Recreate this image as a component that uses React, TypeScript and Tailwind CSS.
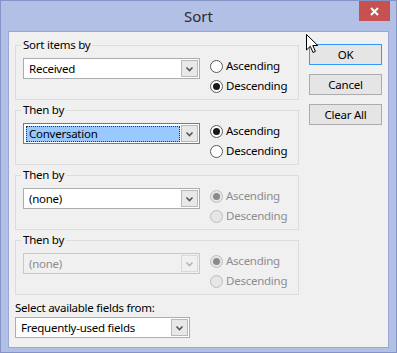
import React from "react";

type SortGroup = {
  label: string;
  value: string;
  asc: boolean;
  highlight?: boolean;
  comboDisabled?: boolean;
  radiosDisabled?: boolean;
};

const groups: SortGroup[] = [
  { label: "Sort items by", value: "Received", asc: false },
  { label: "Then by", value: "Conversation", asc: true, highlight: true },
  { label: "Then by", value: "(none)", asc: true, radiosDisabled: true },
  { label: "Then by", value: "(none)", asc: true, comboDisabled: true, radiosDisabled: true },
];

function Chevron({ disabled }: { disabled?: boolean }) {
  return (
    <svg width="9" height="6" viewBox="0 0 9 6">
      <path
        d="M1.5 1.5 L4.5 4.5 L7.5 1.5"
        fill="none"
        stroke={disabled ? "#b5b5b5" : "#555"}
        strokeWidth="1.6"
      />
    </svg>
  );
}

function Combo({
  value,
  width,
  highlight,
  disabled,
}: {
  value: string;
  width: string;
  highlight?: boolean;
  disabled?: boolean;
}) {
  return (
    <div
      className={`${width} h-[21px] flex items-center border p-[1px] ${
        disabled ? "border-[#b6cbe6] bg-[#f0f0f0]" : highlight ? "border-[#7a7a7a] bg-white" : "border-[#abadb3] bg-white"
      }`}
    >
      <div className="flex-1 h-full flex items-center pl-[1px] pr-[1px]">
        {highlight ? (
          <div className="w-full h-[16px] bg-[#99c9ff] border border-dotted border-[#333] flex items-center pl-[2px] text-black">
            {value}
          </div>
        ) : (
          <span className={`pl-[3px] ${disabled ? "text-[#8d8d8d]" : "text-black"}`}>{value}</span>
        )}
      </div>
      <div
        className={`w-[17px] h-full flex items-center justify-center border ${
          disabled ? "border-[#d9d9d9] bg-[#f0f0f0]" : "border-[#b9b9b9] bg-[#e8e8e8]"
        }`}
      >
        <Chevron disabled={disabled} />
      </div>
    </div>
  );
}

function Radio({ label, checked, disabled }: { label: string; checked: boolean; disabled?: boolean }) {
  return (
    <div className="h-[20px] flex items-center gap-[3px]">
      <span
        className={`w-[13px] h-[13px] rounded-full border flex items-center justify-center ${
          disabled ? "border-[#bcbcbc] bg-[#e6e6e6]" : "border-[#5a5a5a] bg-white"
        }`}
      >
        {checked && (
          <span className={`w-[7px] h-[7px] rounded-full ${disabled ? "bg-[#8a8a8a]" : "bg-[#1a1a1a]"}`} />
        )}
      </span>
      <span className={disabled ? "text-[#8d8d8d]" : "text-black"}>{label}</span>
    </div>
  );
}

function Button({ label, primary }: { label: string; primary?: boolean }) {
  return (
    <button
      className={`w-[73px] h-[21px] flex items-center justify-center border bg-[#e5e5e5] text-black ${
        primary ? "border-[#3399ff]" : "border-[#acacac]"
      }`}
    >
      {label}
    </button>
  );
}

function Cursor() {
  return (
    <svg className="absolute left-[305px] top-[33px]" width="13" height="20" viewBox="0 0 13 20">
      <path
        d="M0.5 0.5 L0.5 16 L4.3 12.3 L7 18.5 L9.4 17.4 L6.8 11.5 L11.8 11.5 Z"
        fill="white"
        stroke="black"
        strokeWidth="1"
        strokeLinejoin="round"
      />
    </svg>
  );
}

export default function App() {
  return (
    <div className="w-[397px] h-[353px] relative flex flex-col bg-[#b2c0e5] border border-[#8594c8] font-['Noto_Sans',sans-serif] text-[11.5px] tracking-[-0.25px] leading-[16px] overflow-hidden">
      {/* Title bar */}
      <div className="h-[30px] grid grid-cols-[1fr_auto_1fr]">
        <div />
        <div className="text-[15px] tracking-normal text-[#2b2b2b] pt-[6px] leading-[18px]">Sort</div>
        <div className="flex justify-end pr-[6px]">
          <div className="w-[31px] h-[20px] bg-[#c75050] flex items-center justify-center">
            <svg width="9" height="9" viewBox="0 0 9 9">
              <path d="M1 1 L8 8 M8 1 L1 8" stroke="white" strokeWidth="2" />
            </svg>
          </div>
        </div>
      </div>

      {/* Client area */}
      <div className="flex-1 mx-[7px] mb-[4px] bg-[#f0f0f0] border border-[#9aa7d2] flex pl-[6px] pt-[5px]">
        <div className="flex flex-col w-[284px]">
          <div className="flex flex-col gap-[2px]">
            {groups.map((g, i) => (
              <fieldset key={i} className="h-[63px] border border-[#dcdcdc] px-[7px] pt-[5px] m-0">
                <legend className="-ml-[2px] px-[2px] text-black">{g.label}</legend>
                <div className="flex gap-[10px]">
                  <Combo value={g.value} width="w-[177px]" highlight={g.highlight} disabled={g.comboDisabled} />
                  <div className="flex flex-col -mt-[2px]">
                    <Radio label="Ascending" checked={g.asc} disabled={g.radiosDisabled} />
                    <Radio label="Descending" checked={!g.asc} disabled={g.radiosDisabled} />
                  </div>
                </div>
              </fieldset>
            ))}
          </div>
          <div className="mt-[5px] text-black">Select available fields from:</div>
          <div className="mt-[1px]">
            <Combo value="Frequently-used fields" width="w-[175px]" />
          </div>
        </div>

        <div className="flex flex-col gap-[9px] ml-[10px] pt-[7px]">
          <Button label="OK" primary />
          <Button label="Cancel" />
          <Button label="Clear All" />
        </div>
      </div>

      <Cursor />
    </div>
  );
}
